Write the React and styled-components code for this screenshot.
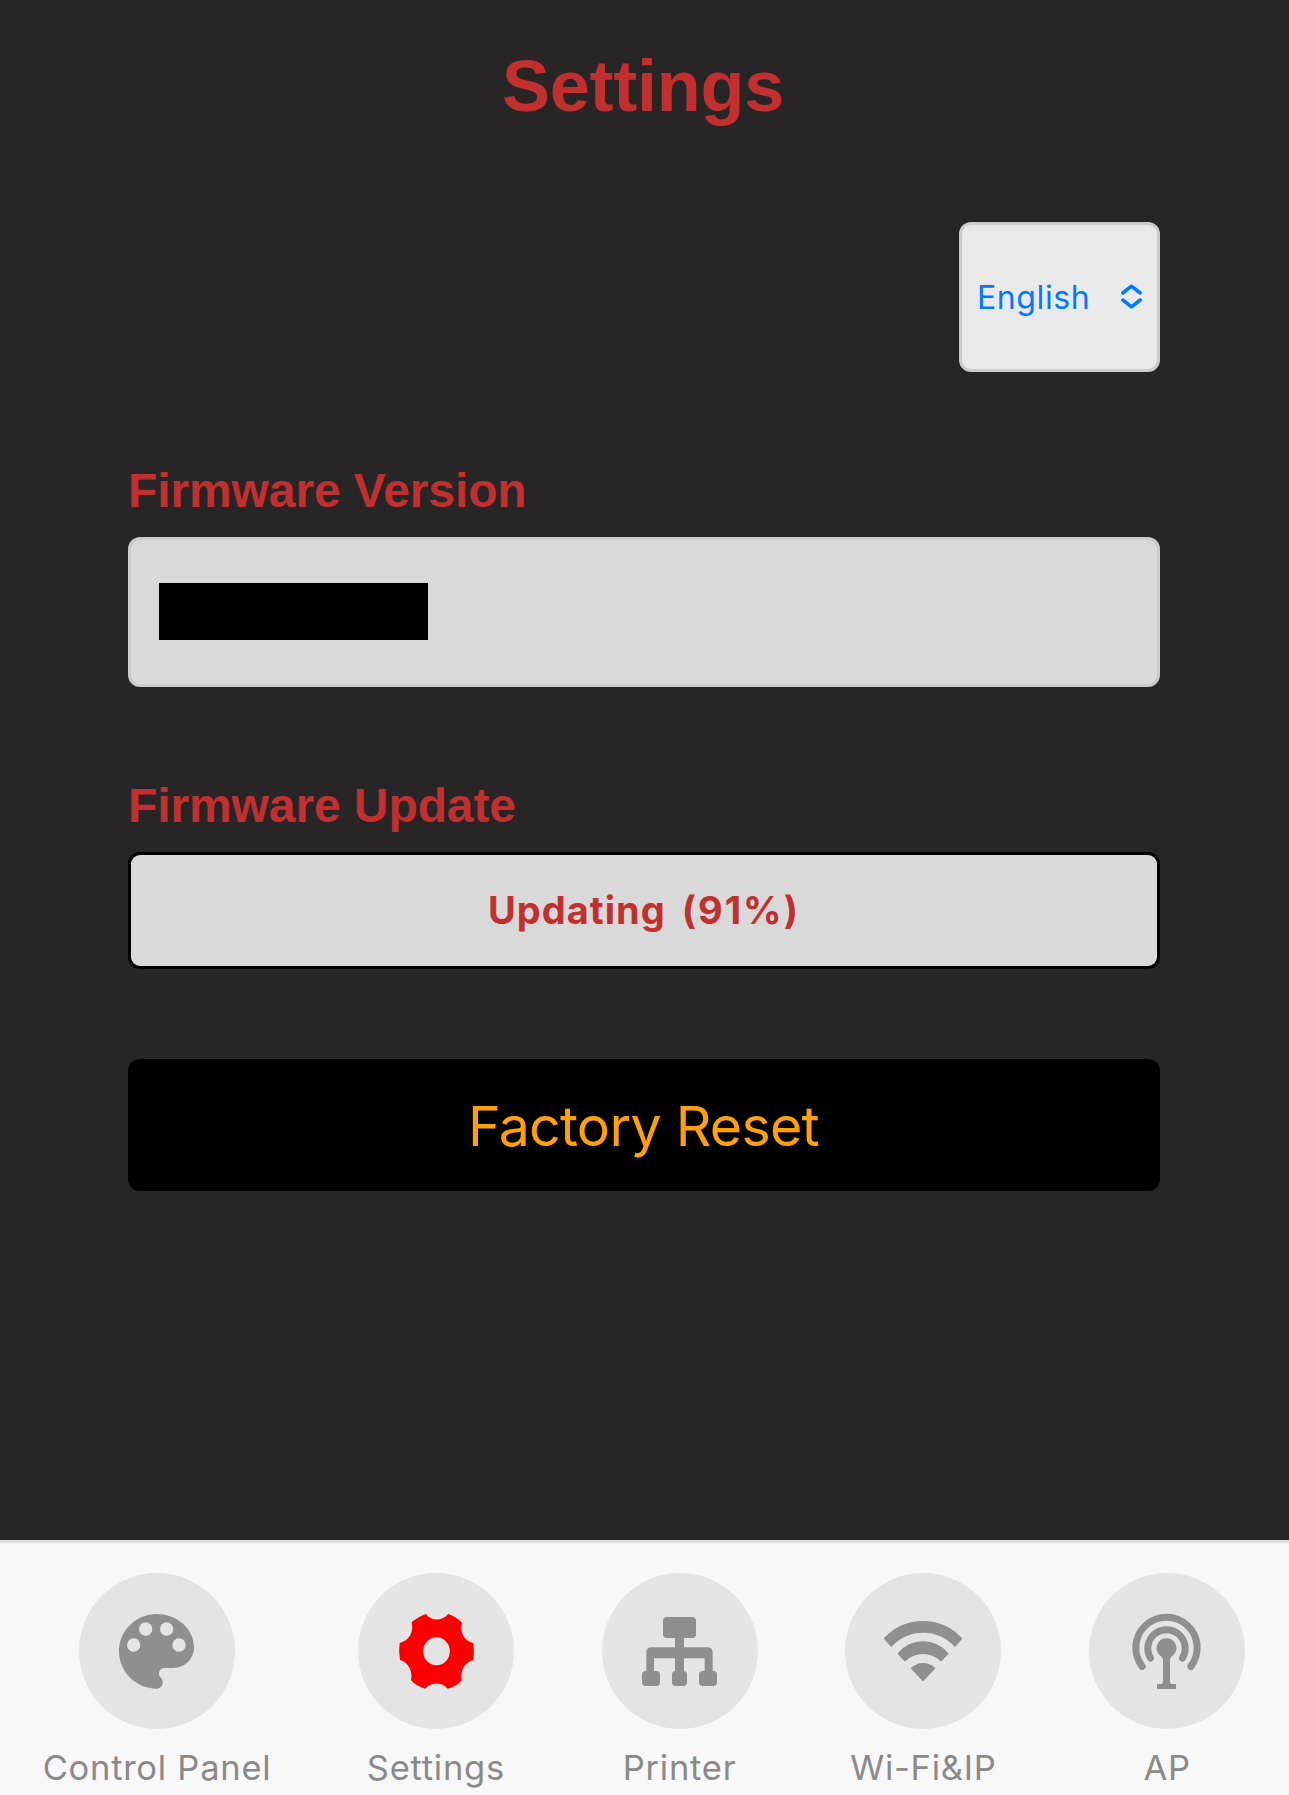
import React from "react";
import styled, { createGlobalStyle } from "styled-components";

const GlobalStyle = createGlobalStyle`
  *, *::before, *::after { box-sizing: border-box; }
  body {
    margin: 0;
    background: #282526;
    font-family: Inter, "Noto Sans", sans-serif;
  }
  button { font-family: inherit; margin: 0; padding: 0; }
`;

const Screen = styled.div`
  display: flex;
  flex-direction: column;
  height: 1795px;
  background: #282526;
`;

const Main = styled.main`
  flex: 1;
  display: flex;
  flex-direction: column;
  padding: 44px 129px 0 128px;
`;

const Title = styled.h1`
  margin: 0 0 94px;
  padding-right: 2px;
  font: bold 72px/84px "Liberation Sans", Arial, sans-serif;
  letter-spacing: -0.25px;
  text-align: center;
  color: #c12f2f;
`;

const LanguageSelect = styled.button`
  align-self: flex-end;
  display: flex;
  align-items: center;
  justify-content: space-between;
  width: 201px;
  height: 150px;
  padding: 0 15px;
  border: 3px solid #cbcbcb;
  border-radius: 12px;
  background: #e9e9e9;
  color: #007aff;
  font-size: 32px;
  letter-spacing: 0.6px;
`;

const Section = styled.section`
  display: flex;
  flex-direction: column;
  gap: 18px;
  margin-top: 91px;
`;

const SectionLabel = styled.h2`
  margin: 0;
  font: bold 48px/56px "Liberation Sans", Arial, sans-serif;
  letter-spacing: -0.1px;
  color: #c12f2f;
`;

const VersionField = styled.div`
  display: flex;
  align-items: center;
  height: 150px;
  padding: 0 28px 2px;
  border: 3px solid #cbcbcb;
  border-radius: 12px;
  background: #d9d9d9;
`;

const Redacted = styled.span`
  width: 269px;
  height: 57px;
  background: #000;
`;

const UpdateButton = styled.button`
  display: flex;
  align-items: center;
  justify-content: center;
  gap: 16px;
  height: 117px;
  padding-bottom: 2px;
  border: 3px solid #000;
  border-radius: 12px;
  background: #d9d9d9;
  color: #c12f2f;
  font-size: 38px;
  font-weight: 700;
  letter-spacing: 1px;
`;

const Percent = styled.span`
  letter-spacing: 2px;
`;

const ResetButton = styled.button`
  height: 132px;
  margin-top: 90px;
  padding: 1px 1px 0 0;
  border: 0;
  border-radius: 12px;
  background: #000;
  color: #ffa00a;
  font-size: 55.5px;
  letter-spacing: -0.75px;
`;

const TabBar = styled.nav`
  display: grid;
  grid-template-columns: 314px repeat(4, 1fr);
  height: 255px;
  padding-top: 30px;
  border-top: 3px solid #dedddd;
  background: #f8f8f8;
`;

const Tab = styled.a`
  display: flex;
  flex-direction: column;
  align-items: center;
  gap: 19px;
  color: ${(p) => (p.$active ? "#fa0000" : "#8f8f8f")};
`;

const IconCircle = styled.span`
  display: flex;
  width: 156px;
  height: 156px;
  border-radius: 50%;
  background: #e4e4e4;
`;

const TabLabel = styled.span`
  font-size: 34.5px;
  line-height: 40px;
  letter-spacing: 0.75px;
  white-space: nowrap;
  color: #8a8a8a;
`;

const Glyph = ({ box, children }) => (
  <svg width="156" height="156" viewBox={box} fill="currentColor" aria-hidden="true">
    {children}
  </svg>
);

const PaletteIcon = () => (
  <Glyph box="147 129 468 468">
    <path
      fillRule="evenodd"
      d="M380 252C318 252 267 302 267 364C267 426 318 476 380 476C390 476 398 468 398 458C398 452 396 447 392 442C389 439 387 436 387 431C387 421 394 414 405 414L430 414C464 414 492 387 492 352C492 297 442 252 380 252Z
      M291 345a20 20 0 1 0 40 0a20 20 0 1 0-40 0Z
      M327 297a20 20 0 1 0 40 0a20 20 0 1 0-40 0Z
      M390 297a20 20 0 1 0 40 0a20 20 0 1 0-40 0Z
      M427 345a20 20 0 1 0 40 0a20 20 0 1 0-40 0Z"
    />
  </Glyph>
);

const GearIcon = () => (
  <Glyph box="84 129 468 468">
    <path
      fillRule="evenodd"
      d="M288 252C302 274 338 274 354 252Q378 260 396 278C388 306 403 333 430 339Q434 364 430 390C404 396 389 424 395 452Q376 470 353 476C336 455 303 455 285 476Q261 470 243 451C249 424 235 396 210 390Q205 364 209 339C237 333 252 306 245 277Q264 260 288 252Z
      M279.500 364a40 42 0 1 0 80 0a40 42 0 1 0-80 0Z"
    />
  </Glyph>
);

const NetworkIcon = () => (
  <Glyph box="66 129 468 468">
    <rect x="249" y="261" width="99" height="63" rx="11" />
    <rect x="285" y="320" width="27" height="110" />
    <path d="M199 430V368Q199 352 215 352H382Q398 352 398 368V430H374V385H222V430Z" />
    <rect x="186" y="423" width="54" height="45" rx="11" />
    <rect x="276" y="423" width="45" height="45" rx="11" />
    <rect x="357" y="423" width="54" height="45" rx="11" />
  </Glyph>
);

const WifiIcon = () => (
  <Glyph box="45 129 468 468">
    <g stroke="currentColor" strokeWidth="6" strokeLinejoin="round">
      <path d="M165 326A155 155 0 0 1 393 326L375 347A130.500 130.500 0 0 0 184 347Z" />
      <path d="M206 371A95 95 0 0 1 352 371L333 391A78 78 0 0 0 225 391Z" />
      <path d="M246 415A48 48 0 0 1 312 415L279 450Z" />
    </g>
  </Glyph>
);

const AntennaIcon = () => (
  <Glyph box="57 129 468 468">
    <g fill="none" stroke="currentColor" strokeWidth="21" strokeLinecap="round">
      <path d="M216.500 409.500A92 92 0 1 1 362.500 409.500" />
      <path d="M241.500 384A56 56 0 1 1 337.500 384" />
    </g>
    <path d="M289.500 325A29 29 0 0 1 311 374C303 381 300 384 300 390V452Q300 462 308 462H318V477H261V462H271Q279 462 279 452V390C279 384 276 381 268 374A29 29 0 0 1 289.500 325Z" />
  </Glyph>
);

const ChevronGlyph = styled.svg`
  width: 21px;
  height: 25px;
  margin-bottom: 1px;
  fill: none;
  stroke: currentColor;
  stroke-width: 3.5;
  stroke-linecap: round;
  stroke-linejoin: round;
`;

const tabs = [
  { label: "Control Panel", Icon: PaletteIcon },
  { label: "Settings", Icon: GearIcon, active: true },
  { label: "Printer", Icon: NetworkIcon },
  { label: "Wi-Fi&IP", Icon: WifiIcon },
  { label: "AP", Icon: AntennaIcon },
];

export default function App() {
  return (
    <Screen>
      <GlobalStyle />
      <Main>
        <Title>Settings</Title>
        <LanguageSelect>
          English
          <ChevronGlyph viewBox="0 0 21 25" aria-hidden="true">
            <path d="M1.800 9L10.500 2.200L19.200 9M1.800 16L10.500 22.800L19.200 16" />
          </ChevronGlyph>
        </LanguageSelect>
        <Section>
          <SectionLabel>Firmware Version</SectionLabel>
          <VersionField>
            <Redacted />
          </VersionField>
        </Section>
        <Section>
          <SectionLabel>Firmware Update</SectionLabel>
          <UpdateButton>
            <span>Updating</span>
            <Percent>(91%)</Percent>
          </UpdateButton>
        </Section>
        <ResetButton>Factory Reset</ResetButton>
      </Main>
      <TabBar>
        {tabs.map(({ label, Icon, active }) => (
          <Tab key={label} $active={active}>
            <IconCircle>
              <Icon />
            </IconCircle>
            <TabLabel>{label}</TabLabel>
          </Tab>
        ))}
      </TabBar>
    </Screen>
  );
}
